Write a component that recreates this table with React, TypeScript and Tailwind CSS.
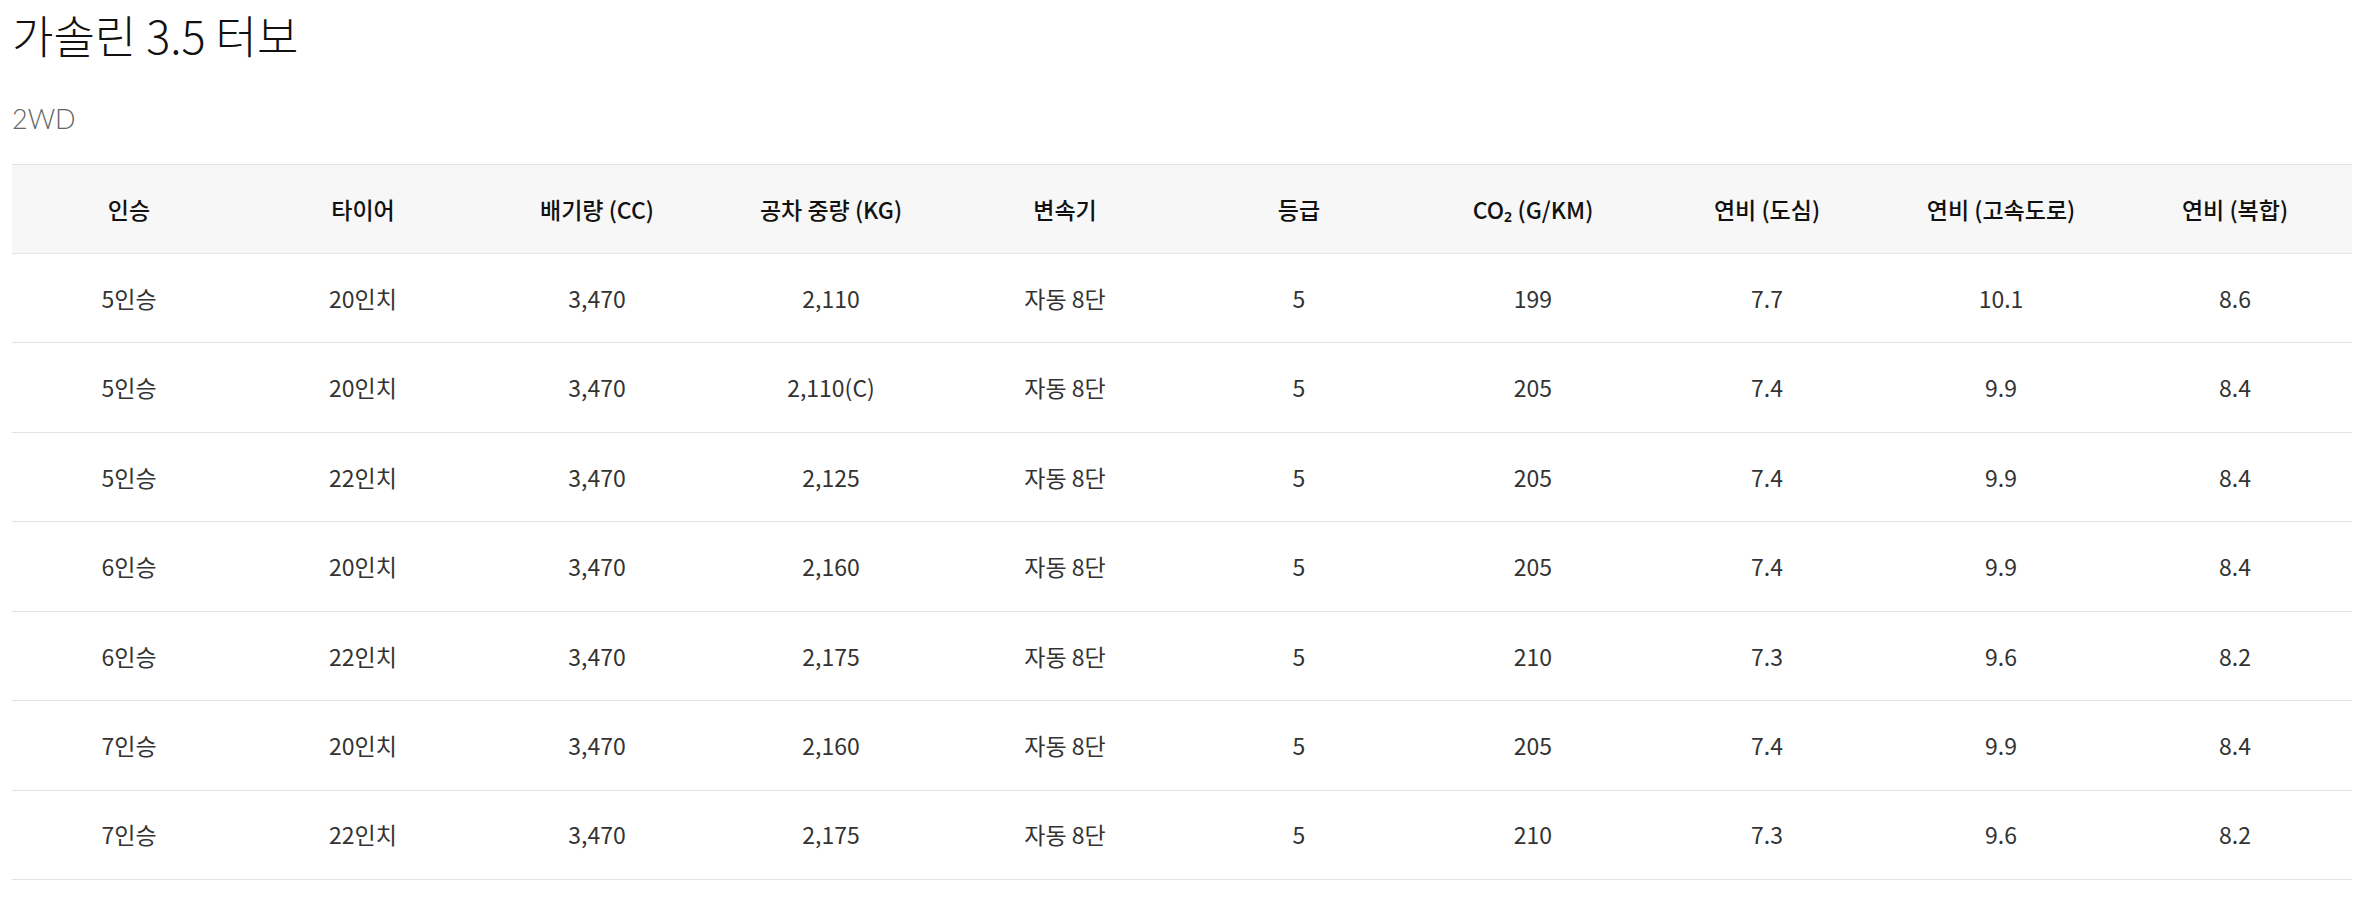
import React from "react";

const headers = [
  "인승",
  "타이어",
  "배기량 (CC)",
  "공차 중량 (KG)",
  "변속기",
  "등급",
  "CO₂ (G/KM)",
  "연비 (도심)",
  "연비 (고속도로)",
  "연비 (복합)",
];

const rows = [
  ["5인승", "20인치", "3,470", "2,110", "자동 8단", "5", "199", "7.7", "10.1", "8.6"],
  ["5인승", "20인치", "3,470", "2,110(C)", "자동 8단", "5", "205", "7.4", "9.9", "8.4"],
  ["5인승", "22인치", "3,470", "2,125", "자동 8단", "5", "205", "7.4", "9.9", "8.4"],
  ["6인승", "20인치", "3,470", "2,160", "자동 8단", "5", "205", "7.4", "9.9", "8.4"],
  ["6인승", "22인치", "3,470", "2,175", "자동 8단", "5", "210", "7.3", "9.6", "8.2"],
  ["7인승", "20인치", "3,470", "2,160", "자동 8단", "5", "205", "7.4", "9.9", "8.4"],
  ["7인승", "22인치", "3,470", "2,175", "자동 8단", "5", "210", "7.3", "9.6", "8.2"],
];

export default function App() {
  return (
    <div
      className="w-[2379px] h-[898px] overflow-hidden bg-white pl-[12px]"
      style={{ fontFamily: '"Noto Sans CJK KR", "Noto Sans", sans-serif' }}
    >
      <h1 className="pt-[8px] text-[45px] leading-[54px] font-light text-[#111]">
        가솔린 3.5 터보
      </h1>
      <div
        className="mt-[41px] text-[27px] leading-[32px] font-light text-[#666]"
        style={{ fontFamily: 'Lato, "Noto Sans CJK KR", sans-serif' }}
      >
        2WD
      </div>
      <div className="mt-[29px] w-[2340px]">
        <div className="grid grid-cols-10 h-[90px] border-y border-[#e3e3e3] bg-[#f7f7f7] items-center">
          {headers.map((h, i) => (
            <div key={i} className="text-center text-[23px] font-medium text-[#111]">
              {h}
            </div>
          ))}
        </div>
        {rows.map((r, ri) => (
          <div
            key={ri}
            className="grid grid-cols-10 h-[89.43px] border-b border-[#e3e3e3] items-center"
          >
            {r.map((c, ci) => (
              <div key={ci} className="text-center text-[23px] text-[#333]">
                {c}
              </div>
            ))}
          </div>
        ))}
      </div>
    </div>
  );
}
